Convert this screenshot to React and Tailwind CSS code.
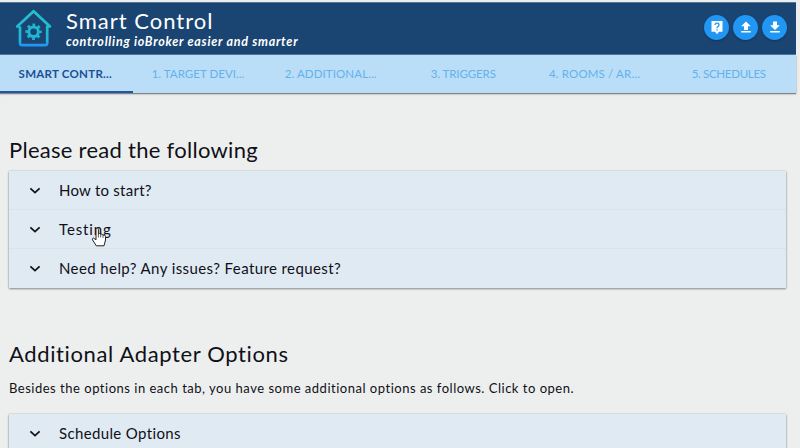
const tabs = [
  { label: 'SMART CONTR...', style: 'tracking-[0.27px]' },
  { label: '1. TARGET DEVI...', style: 'tracking-[0.05px]' },
  { label: '2. ADDITIONAL...', style: 'tracking-[0.1px]' },
  { label: '3. TRIGGERS', style: 'tracking-[-0.1px]' },
  { label: '4. ROOMS / AR...', style: 'tracking-[0.15px] pr-[5px]' },
  { label: '5. SCHEDULES', style: 'tracking-[-0.3px]' },
];

function Logo() {
  return (
    <svg className="mt-[5px] ml-[15px] h-[42px] w-[38px] shrink-0" viewBox="0 0 38 42" fill="none">
      <defs>
        <linearGradient id="house" x1="0" y1="0" x2="0" y2="41" gradientUnits="userSpaceOnUse">
          <stop offset="0" stopColor="#25c2c8" />
          <stop offset="0.78" stopColor="#20b6d8" />
          <stop offset="0.9" stopColor="#2196f3" />
        </linearGradient>
      </defs>
      <path
        d="M5 18.5V35Q5 37.2 7.2 37.2H30Q32.2 37.2 32.2 35V18.5H35L18.6 3.2L2.2 18.5H5"
        stroke="url(#house)"
        strokeWidth="2.7"
        strokeLinejoin="round"
      />
      <circle cx="18.6" cy="23.7" r="4.8" stroke="#20b6d4" strokeWidth="3" />
      <circle cx="18.6" cy="23.7" r="7" stroke="#20b6d4" strokeWidth="2.4" strokeDasharray="2.75 2.75" strokeDashoffset="1.37" />
    </svg>
  );
}

function RoundButton({ children }) {
  return (
    <button className="flex size-[25px] items-center justify-center rounded-full bg-[#2196f3] shadow-[0_1px_2px_rgba(0,0,0,0.25)]">
      {children}
    </button>
  );
}

function Row({ children, style = '' }) {
  return (
    <div className="flex h-[39px] items-center border-b border-[#dce2e7] pl-[20px] last:border-transparent">
      <svg className="size-[12px]" viewBox="0 0 12 12" fill="none" stroke="#111" strokeWidth="1.7">
        <path d="M1.4 4.3L6 8.6L10.6 4.3" />
      </svg>
      <span className={'ml-[18px] whitespace-nowrap text-[15px] leading-[20px] ' + style}>{children}</span>
    </div>
  );
}

export default function App() {
  return (
    <div className="relative h-[448px] w-[800px] overflow-hidden bg-[#edefee] font-['Lato','Liberation_Sans',sans-serif] text-[#101018]">
      <div className="mt-[2px] w-[796px]">
        <header className="flex h-[53px] border-y border-[#54779a] bg-[#1a4472] text-white">
          <Logo />
          <div className="ml-[13px] flex-1 whitespace-nowrap">
            <h1 className="mt-[5px] text-[22px] leading-[26px] tracking-[1px]">Smart Control</h1>
            <p className="mt-px text-[12.5px] leading-[14px] font-bold italic tracking-[0.75px]">controlling ioBroker easier and smarter</p>
          </div>
          <div className="mt-[12px] mr-[9px] flex gap-[4px]">
            <RoundButton>
              <svg className="h-[14px] w-[12px]" viewBox="0 0 12 14">
                <path d="M0.5 0H11.5V10.8H8L6 13.2L4 10.8H0.5Z" fill="#fff" />
                <path d="M4 4Q4 2.2 6 2.2T8 4Q8 5 6.8 5.7Q6 6.2 6 7.2M6 8.3V9.6" fill="none" stroke="#2196f3" strokeWidth="1.3" />
              </svg>
            </RoundButton>
            <RoundButton>
              <svg className="mb-[2px] h-[12px] w-[10px]" viewBox="0 0 10 12" fill="#fff">
                <path d="M5 0.5L9.8 5.2H7V9H3V5.2H0.2ZM0.2 10H9.8V11.5H0.2Z" />
              </svg>
            </RoundButton>
            <RoundButton>
              <svg className="mb-[2px] h-[12px] w-[10px]" viewBox="0 0 10 12" fill="#fff">
                <path d="M3 0.5H7V4.2H9.8L5 9L0.2 4.2H3ZM0.2 10H9.8V11.5H0.2Z" />
              </svg>
            </RoundButton>
          </div>
        </header>
        <nav className="grid h-[38px] grid-cols-6 bg-[#badef8] shadow-[0_1px_1px_rgba(60,60,60,0.55),0_1px_3px_rgba(0,0,0,0.15)]">
          {tabs.map((tab, i) => (
            <a
              key={tab.label}
              className={
                'flex items-center justify-center border-b-2 pt-[2px] pr-[2px] whitespace-nowrap text-[11.5px] ' +
                tab.style +
                (i === 0 ? ' border-[#2256a5] font-bold text-[#1d4f93]' : ' border-transparent text-[#64b1ec]')
              }
            >
              {tab.label}
            </a>
          ))}
        </nav>
      </div>

      <main className="pl-[9px]">
        <h2 className="mt-[42px] text-[22px] leading-[30px] tracking-[0.28px]">Please read the following</h2>
        <div className="mt-[6px] w-[777px] bg-[#e0eaf3] shadow-[0_1px_2px_rgba(0,0,0,0.4),0_0_2px_rgba(0,0,0,0.15)]">
          <Row style="tracking-[0.25px]">How to start?</Row>
          <Row style="tracking-[0.85px]">Testing</Row>
          <Row style="tracking-[0.4px]">Need help? Any issues? Feature request?</Row>
        </div>
        <h2 className="mt-[51px] text-[22px] leading-[30px] tracking-[0.63px]">Additional Adapter Options</h2>
        <p className="mt-[9px] whitespace-nowrap text-[13px] leading-[20px] tracking-[0.51px]">
          Besides the options in each tab, you have some additional options as follows. Click to open.
        </p>
        <div className="mt-[16px] w-[777px] bg-[#e0eaf3] shadow-[0_1px_2px_rgba(0,0,0,0.4),0_0_2px_rgba(0,0,0,0.15)]">
          <Row style="tracking-[0.36px]">Schedule Options</Row>
        </div>
      </main>

      <svg className="absolute top-[227px] left-[91px] h-[20px] w-[16px]" viewBox="0 0 16 20">
        <path
          d="M5.3 18.8L1.5 12.8Q1 11.2 2.6 11.1L5 12.8V2.4Q5 1 6.2 1T7.4 2.4V7Q8.6 5.8 9.6 7.4Q11 6.4 11.9 8Q14 7.4 14.5 9.5V13L13 18.8Z"
          fill="#fff"
          stroke="#222"
          strokeWidth="1"
          strokeLinejoin="round"
        />
        <path d="M7.4 7V10.5M9.7 7.4V10.5M12 8V10.8" stroke="#333" strokeWidth="0.8" />
      </svg>
    </div>
  );
}
